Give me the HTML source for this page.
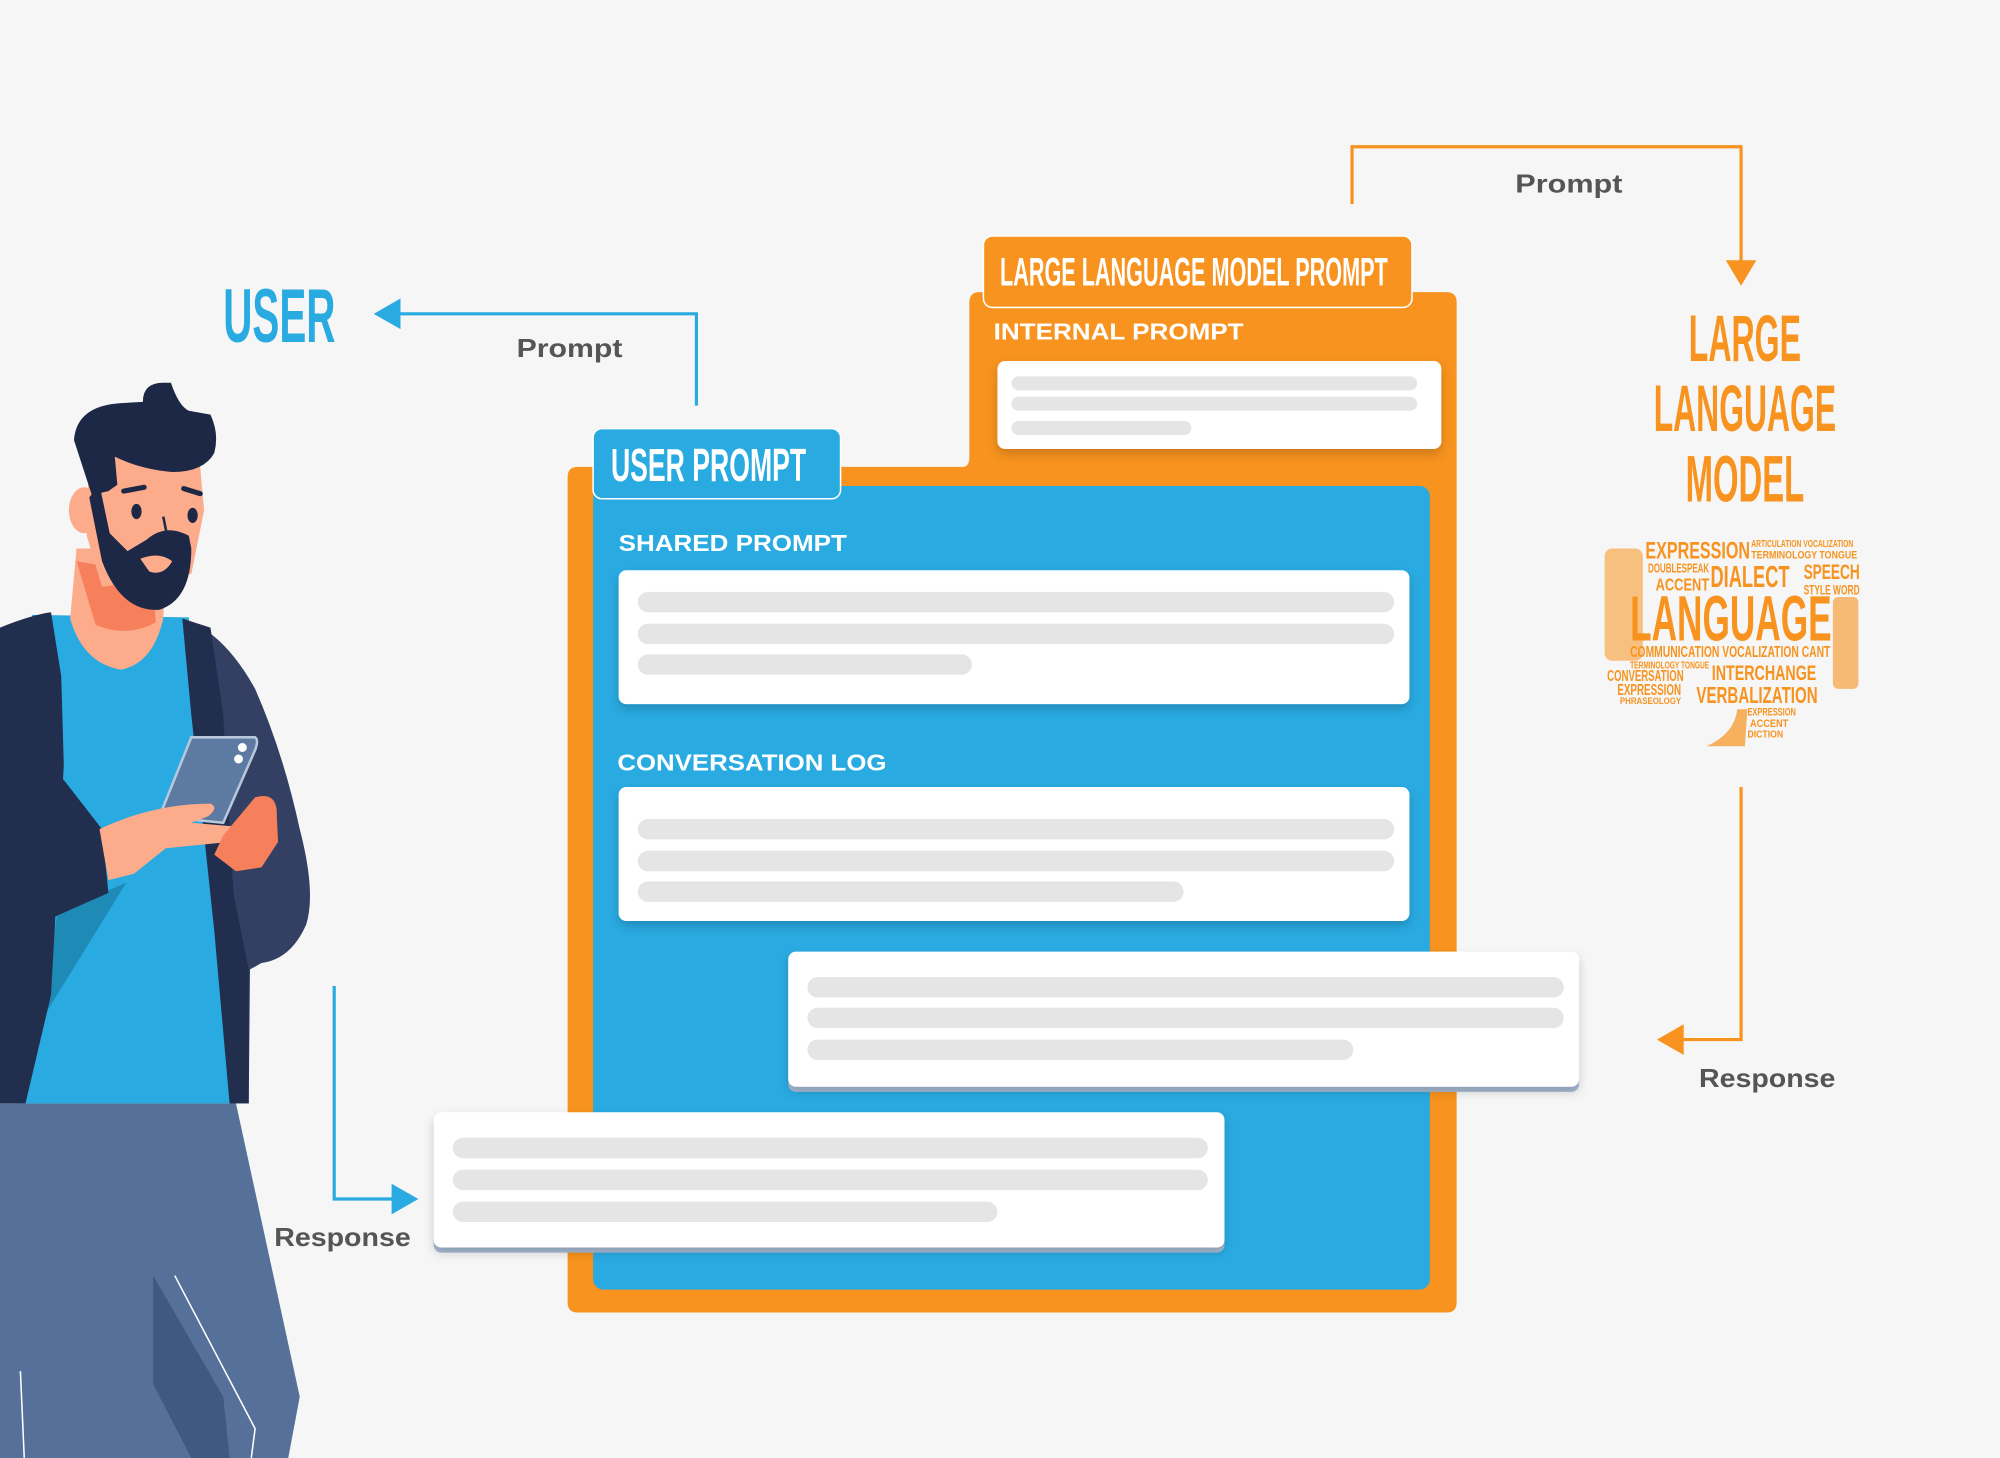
<!DOCTYPE html>
<html><head><meta charset="utf-8"><style>
html,body{margin:0;padding:0;background:#f6f6f6;}
svg{display:block}
.cond{font-family:"Liberation Sans Narrow","Liberation Sans",sans-serif;font-weight:bold;}
.sans{font-family:"Liberation Sans",sans-serif;font-weight:bold;}
</style></head><body>
<svg width="2000" height="1458" viewBox="0 0 1568 1143" xmlns="http://www.w3.org/2000/svg">
<defs>
<filter id="sh" x="-5%" y="-10%" width="110%" height="130%"><feDropShadow dx="0" dy="4" stdDeviation="4" flood-color="#000" flood-opacity="0.18"/></filter>
</defs>
<rect width="1568" height="1143" fill="#f6f6f6"/>

<polyline points="546,318 546,246 310,246" fill="none" stroke="#29aae1" stroke-width="2.5"/>
<polygon points="293,246 314,234 314,258" fill="#29aae1"/>
<text x="219" y="268" class="cond" font-size="60" fill="#29aae1" text-anchor="middle" textLength="88" lengthAdjust="spacingAndGlyphs">USER</text>
<text x="405" y="280" class="sans" font-size="20" fill="#555" textLength="83" lengthAdjust="spacingAndGlyphs">Prompt</text>

<polyline points="1060,160 1060,115 1365,115 1365,208" fill="none" stroke="#f7931e" stroke-width="2.5"/>
<polygon points="1365,224 1353,204 1377,204" fill="#f7931e"/>
<text x="1188" y="151" class="sans" font-size="20" fill="#555" textLength="84" lengthAdjust="spacingAndGlyphs">Prompt</text>

<g class="cond" fill="#f7931e" text-anchor="middle" font-size="52">
<text x="1368" y="283" textLength="88" lengthAdjust="spacingAndGlyphs">LARGE</text>
<text x="1368" y="338" textLength="143" lengthAdjust="spacingAndGlyphs">LANGUAGE</text>
<text x="1368" y="393" textLength="93" lengthAdjust="spacingAndGlyphs">MODEL</text>
</g>

<g class="cond" fill="#f7931e">
<text x="1290" y="438" font-size="19" textLength="82" lengthAdjust="spacingAndGlyphs">EXPRESSION</text>
<text x="1373" y="429" font-size="8" textLength="80" lengthAdjust="spacingAndGlyphs">ARTICULATION VOCALIZATION</text>
<text x="1373" y="438" font-size="9" textLength="83" lengthAdjust="spacingAndGlyphs">TERMINOLOGY TONGUE</text>
<text x="1292" y="449" font-size="10" textLength="48" lengthAdjust="spacingAndGlyphs">DOUBLESPEAK</text>
<text x="1341" y="460" font-size="24" textLength="62" lengthAdjust="spacingAndGlyphs">DIALECT</text>
<text x="1414" y="454" font-size="17" textLength="44" lengthAdjust="spacingAndGlyphs">SPEECH</text>
<text x="1298" y="463" font-size="14" textLength="42" lengthAdjust="spacingAndGlyphs">ACCENT</text>
<text x="1414" y="466" font-size="11" textLength="44" lengthAdjust="spacingAndGlyphs">STYLE WORD</text>
<text x="1278" y="502" font-size="50" textLength="158" lengthAdjust="spacingAndGlyphs">LANGUAGE</text>
<text x="1278" y="515" font-size="12" textLength="157" lengthAdjust="spacingAndGlyphs">COMMUNICATION VOCALIZATION CANT</text>
<text x="1278" y="524" font-size="8" textLength="62" lengthAdjust="spacingAndGlyphs">TERMINOLOGY TONGUE</text>
<text x="1342" y="533" font-size="17" textLength="82" lengthAdjust="spacingAndGlyphs">INTERCHANGE</text>
<text x="1260" y="534" font-size="12" textLength="60" lengthAdjust="spacingAndGlyphs">CONVERSATION</text>
<text x="1268" y="545" font-size="12" textLength="50" lengthAdjust="spacingAndGlyphs">EXPRESSION</text>
<text x="1330" y="551" font-size="18" textLength="95" lengthAdjust="spacingAndGlyphs">VERBALIZATION</text>
<text x="1270" y="552" font-size="7" textLength="48" lengthAdjust="spacingAndGlyphs">PHRASEOLOGY</text>
<rect x="1258" y="430" width="30" height="88" rx="6" fill="#f7931e" opacity="0.55"/>
<rect x="1437" y="468" width="20" height="72" rx="4" fill="#f7931e" opacity="0.6"/>
<text x="1370" y="561" font-size="9" textLength="38" lengthAdjust="spacingAndGlyphs">EXPRESSION</text>
<text x="1372" y="570" font-size="9" textLength="30" lengthAdjust="spacingAndGlyphs">ACCENT</text>
<text x="1370" y="578" font-size="8" textLength="28" lengthAdjust="spacingAndGlyphs">DICTION</text>
<path d="M1338,585 Q1360,575 1362,556 L1370,556 L1368,585 Z" fill="#f7931e" opacity="0.7"/>
</g>

<polyline points="1365,617 1365,815 1316,815" fill="none" stroke="#f7931e" stroke-width="2.5"/>
<polygon points="1299,815 1320,803 1320,827" fill="#f7931e"/>
<text x="1332" y="852" class="sans" font-size="20" fill="#555" textLength="107" lengthAdjust="spacingAndGlyphs">Response</text>

<path d="M453,366 L755,366 Q760,366 760,358 L760,237 Q760,229 768,229 L1134,229 Q1142,229 1142,237 L1142,1021 Q1142,1029 1134,1029 L453,1029 Q445,1029 445,1021 L445,374 Q445,366 453,366 Z" fill="#f7931e"/>
<rect x="465" y="381" width="656" height="630" rx="8" fill="#29aae1"/>

<rect x="771" y="185" width="336" height="56" rx="7" fill="#f7931e" stroke="#fff" stroke-width="1.2"/>
<text x="784" y="224" class="cond" font-size="31" fill="#fff" textLength="304" lengthAdjust="spacingAndGlyphs">LARGE LANGUAGE MODEL PROMPT</text>
<text x="779" y="266" class="sans" font-size="18" fill="#fff" textLength="196" lengthAdjust="spacingAndGlyphs">INTERNAL PROMPT</text>
<rect x="782" y="283" width="348" height="69" rx="6" fill="#fff" filter="url(#sh)"/>
<g fill="#e5e5e5">
<rect x="793" y="295" width="318" height="11" rx="5.5"/>
<rect x="793" y="311" width="318" height="11" rx="5.5"/>
<rect x="793" y="330" width="141" height="11" rx="5.5"/>
</g>

<rect x="465" y="336" width="194" height="55" rx="7" fill="#29aae1" stroke="#fff" stroke-width="1.2"/>
<text x="479" y="377" class="cond" font-size="36" fill="#fff" textLength="153" lengthAdjust="spacingAndGlyphs">USER PROMPT</text>

<text x="485" y="432" class="sans" font-size="18" fill="#fff" textLength="179" lengthAdjust="spacingAndGlyphs">SHARED PROMPT</text>
<rect x="485" y="447" width="620" height="105" rx="6" fill="#fff" filter="url(#sh)"/>
<g fill="#e5e5e5">
<rect x="500" y="464" width="593" height="16" rx="8"/>
<rect x="500" y="489" width="593" height="16" rx="8"/>
<rect x="500" y="513" width="262" height="16" rx="8"/>
</g>

<text x="484" y="604" class="sans" font-size="18" fill="#fff" textLength="211" lengthAdjust="spacingAndGlyphs">CONVERSATION LOG</text>
<rect x="485" y="617" width="620" height="105" rx="6" fill="#fff" filter="url(#sh)"/>
<g fill="#e5e5e5">
<rect x="500" y="642" width="593" height="16" rx="8"/>
<rect x="500" y="667" width="593" height="16" rx="8"/>
<rect x="500" y="691" width="428" height="16" rx="8"/>
</g>

<rect x="618" y="750" width="620" height="106" rx="6" fill="#a9bdd6"/>
<rect x="618" y="746" width="620" height="106" rx="6" fill="#fff" filter="url(#sh)"/>
<g fill="#e5e5e5">
<rect x="633" y="766" width="593" height="16" rx="8"/>
<rect x="633" y="790" width="593" height="16" rx="8"/>
<rect x="633" y="815" width="428" height="16" rx="8"/>
</g>

<rect x="340" y="876" width="620" height="106" rx="6" fill="#a9bdd6"/>
<rect x="340" y="872" width="620" height="106" rx="6" fill="#fff" filter="url(#sh)"/>
<g fill="#e5e5e5">
<rect x="355" y="892" width="592" height="16" rx="8"/>
<rect x="355" y="917" width="592" height="16" rx="8"/>
<rect x="355" y="942" width="427" height="16" rx="8"/>
</g>

<polyline points="262,773 262,940 310,940" fill="none" stroke="#29aae1" stroke-width="2.5"/>
<polygon points="328,940 307,928 307,952" fill="#29aae1"/>
<text x="215" y="977" class="sans" font-size="20" fill="#555" textLength="107" lengthAdjust="spacingAndGlyphs">Response</text>

<!-- PERSON -->
<path d="M0,865 L185,865 L235,1095 L226,1143 L0,1143 Z" fill="#557099"/>
<path d="M120,1000 L175,1095 L180,1143 L150,1143 L120,1085 Z" fill="#3f5a80"/>
<path d="M94,968 L105,1143 L60,1143 L80,1040 Z" fill="#557099"/>
<path d="M137,1000 L200,1120 L197,1143" stroke="#fff" stroke-width="1.2" fill="none"/>
<path d="M16,1075 L19,1143" stroke="#fff" stroke-width="1.2" fill="none"/>
<!-- shirt -->
<path d="M25,482 L148,484 L160,600 L180,865 L15,865 Z" fill="#29aae1"/>
<path d="M45,715 L99,692 L33,799 Z" fill="#1d8bb5"/>
<!-- jacket left -->
<path d="M0,492 Q25,482 40,480 L48,530 L50,600 L40,780 L20,865 L0,865 Z" fill="#222e4e"/>
<!-- jacket right -->
<path d="M143,485 Q175,495 200,540 Q222,590 235,650 Q248,700 240,725 Q228,752 205,755 L196,760 L195,865 L180,865 L168,720 L150,560 Z" fill="#333f63"/>
<path d="M143,485 L165,492 L175,560 L183,700 L195,760 L195,865 L180,865 L168,730 L150,560 Z" fill="#222e4e"/>
<!-- left arm sleeve -->
<path d="M0,620 L45,605 L80,650 L85,700 L40,720 L0,740 Z" fill="#222e4e"/>
<!-- neck & skin -->
<path d="M60,430 L130,430 L128,485 Q120,520 95,525 Q65,520 55,485 Z" fill="#fcab8b"/>
<path d="M60,440 L120,450 L122,488 Q100,500 75,490 Z" fill="#f6805c"/>
<path d="M70,340 L155,345 L160,400 L150,450 L80,460 L68,420 Z" fill="#fcab8b"/>
<ellipse cx="66" cy="400" rx="12" ry="18" fill="#fcab8b"/>
<path d="M70,390 L80,440 Q95,480 125,478 Q150,470 150,430 L148,420 Q130,410 115,423 L100,432 L86,418 L78,380 Z" fill="#1d2746"/>
<path d="M110,438 Q125,432 135,440 Q128,452 117,448 Z" fill="#fcab8b"/>
<path d="M58,345 Q60,318 95,316 L112,315 Q112,300 128,300 L134,300 Q140,318 148,322 L165,325 Q172,340 168,355 Q160,370 135,370 Q110,368 90,358 L92,380 L85,385 L72,388 Z" fill="#1d2746"/>
<path d="M97,385 L113,382" stroke="#1d2746" stroke-width="4" stroke-linecap="round"/>
<path d="M144,383 L157,387" stroke="#1d2746" stroke-width="4" stroke-linecap="round"/>
<ellipse cx="107" cy="401" rx="4" ry="6" fill="#1d2746"/>
<ellipse cx="151" cy="404" rx="4" ry="6" fill="#1d2746"/>
<path d="M128,405 L131,420 L124,424" stroke="#1d2746" stroke-width="2" fill="none"/>
<path d="M150,578 L200,578 Q203,580 200,588 L175,645 L125,640 Z" fill="#5d7aa3" stroke="#b8c8dc" stroke-width="2"/>
<circle cx="190" cy="586" r="3.5" fill="#fff"/><circle cx="187" cy="595" r="3.5" fill="#fff"/>
<path d="M78,650 Q120,630 165,630 Q172,633 163,640 L150,645 L185,648 L180,660 L130,665 L105,685 L85,690 Z" fill="#fcab8b"/>
<path d="M200,625 Q218,620 217,640 L218,660 L205,680 L185,683 L168,670 L175,655 Z" fill="#f6805c"/>
</svg>
</body></html>
